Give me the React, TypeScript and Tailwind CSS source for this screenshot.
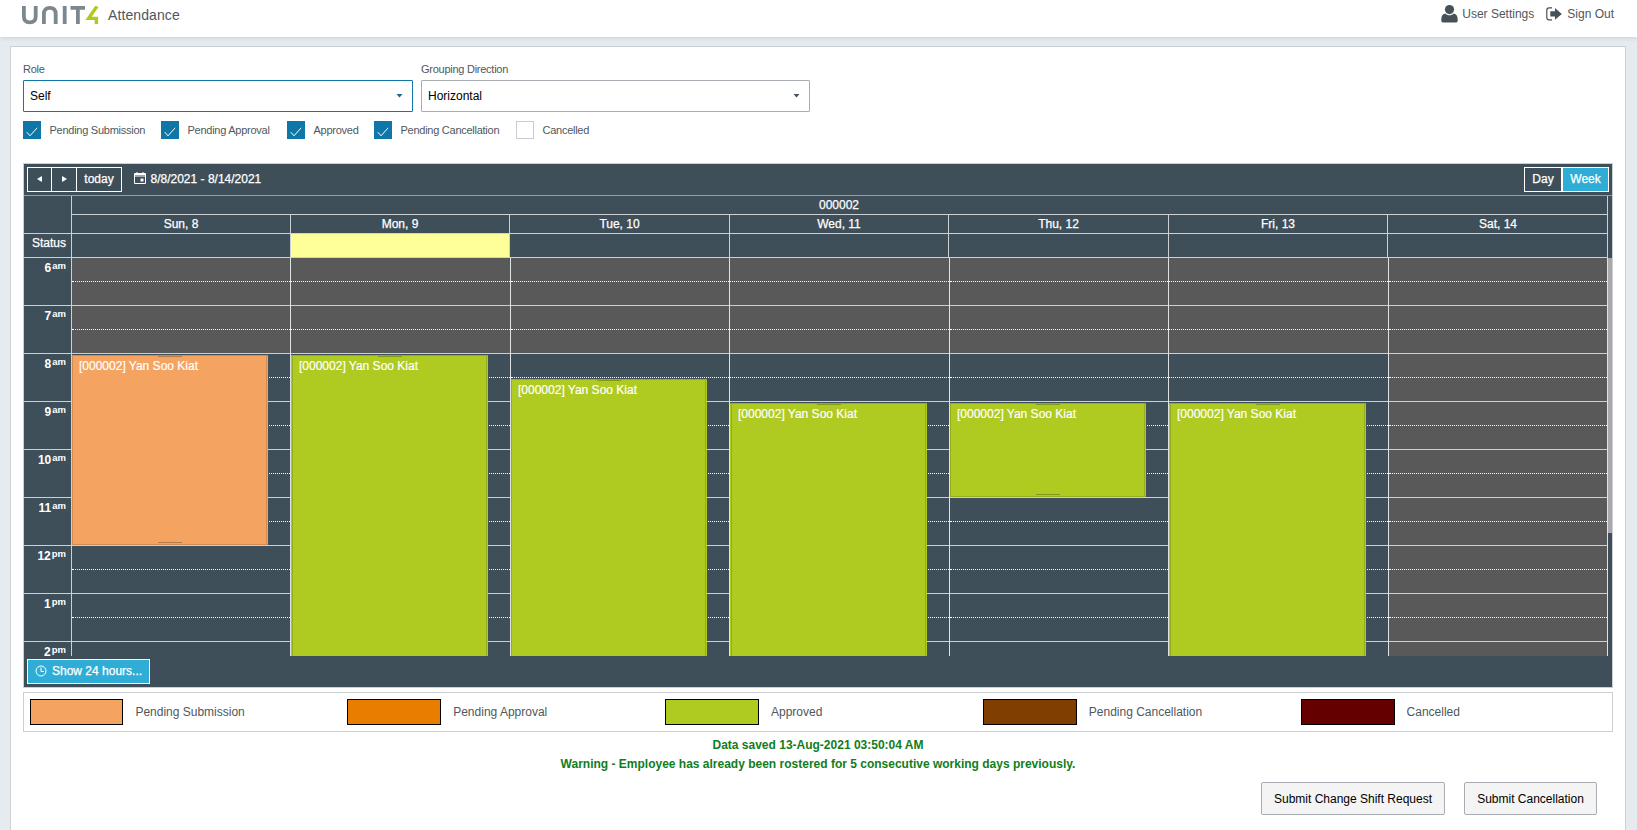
import type { ReactNode } from "react";
import clsx from "clsx";

const PX_PER_HOUR = 48;
const START_HOUR = 6;

const filters = [
  { label: "Pending Submission", checked: true, className: "w-[138px]" },
  { label: "Pending Approval", checked: true, className: "w-[126px]" },
  { label: "Approved", checked: true, className: "w-[87px]" },
  { label: "Pending Cancellation", checked: true, className: "w-[142px]" },
  { label: "Cancelled", checked: false, className: "w-[90px]" },
];

const hours = [
  ["6", "am"],
  ["7", "am"],
  ["8", "am"],
  ["9", "am"],
  ["10", "am"],
  ["11", "am"],
  ["12", "pm"],
  ["1", "pm"],
  ["2", "pm"],
];

type Shift = { start: number; end: number; className: string; inset?: boolean };
type Day = { label: string; today?: boolean; off?: boolean; headWidth: string; width: string; shift?: Shift };

const orange = "bg-[#f4a460] border-[#cf8b53]";
const green = "bg-[#afca21] border-[#96ad1d]";
const days: Day[] = [
  { label: "Sun, 8", headWidth: "w-[219px]", width: "w-[219px]", shift: { start: 8, end: 12, className: orange } },
  { label: "Mon, 9", today: true, headWidth: "w-[219px]", width: "w-[220px]", shift: { start: 8, end: 17, className: green, inset: true } },
  { label: "Tue, 10", headWidth: "w-[220px]", width: "w-[219px]", shift: { start: 8.5, end: 17, className: green } },
  { label: "Wed, 11", headWidth: "w-[219px]", width: "w-[220px]", shift: { start: 9, end: 17, className: green, inset: true } },
  { label: "Thu, 12", headWidth: "w-[220px]", width: "w-[219px]", shift: { start: 9, end: 11, className: green } },
  { label: "Fri, 13", headWidth: "w-[219px]", width: "w-[220px]", shift: { start: 9, end: 17, className: green, inset: true } },
  { label: "Sat, 14", off: true, headWidth: "w-[220px]", width: "w-[219px]" },
];

const legend = [
  { label: "Pending Submission", color: "bg-[#f4a460]" },
  { label: "Pending Approval", color: "bg-[#e97d00]" },
  { label: "Approved", color: "bg-[#afca21]" },
  { label: "Pending Cancellation", color: "bg-[#803e00]" },
  { label: "Cancelled", color: "bg-[#650000]" },
];

function Logo() {
  return (
    <svg width="78" height="20" viewBox="0 0 78 20" fill="none" stroke="#7d888e" strokeWidth="3.8">
      <path d="M1.9 0V10.5C1.9 14.5 4.2 16.3 7.8 16.3S13.7 14.5 13.7 10.5V0" />
      <path d="M21.9 18V8C21.9 4 24.2 1.9 27.8 1.9S33.7 4 33.7 8V18" />
      <path d="M42.7 0V18" />
      <path d="M48.5 1.9H63M55.9 1.9V18" />
      <path d="M75 0.3L66.6 12.4H74.4V18" stroke="#afca21" strokeWidth="3.4" />
    </svg>
  );
}

function UserIcon() {
  return (
    <svg width="17" height="18" viewBox="0 0 17 18" fill="#465158" className="mr-1">
      <circle cx="8.5" cy="4.6" r="4.6" />
      <path d="M4.2 8.4C5.3 9.5 6.8 10.2 8.5 10.2S11.7 9.5 12.8 8.4C15.6 8.8 16.7 11.2 16.7 14.4V15.4C16.7 16.8 15.8 17.6 14.4 17.6H2.6C1.2 17.6 0.3 16.8 0.3 15.4V14.4C0.3 11.2 1.4 8.8 4.2 8.4Z" />
    </svg>
  );
}

function SignOutIcon() {
  return (
    <svg width="16" height="14" viewBox="0 0 16 14" fill="#465158" className="ml-3 mr-[5px]">
      <path d="M6 0.8H3C1.7 0.8 0.8 1.7 0.8 3V10.6C0.8 11.9 1.7 12.8 3 12.8H6" fill="none" stroke="#465158" strokeWidth="1.2" />
      <path d="M4.3 4.2H9V1L15.8 6.9L9 12.8V9.6H4.3Z" />
    </svg>
  );
}

function Header() {
  return (
    <header className="relative flex h-[37px] justify-between bg-white pl-[22px] pr-[23px] text-[#4f575d] shadow-[0_1px_5px_rgba(0,0,0,0.12)]">
      <div className="flex items-start pt-1.5">
        <Logo />
        <span className="ml-2 text-[14px] leading-[18px] tracking-[0.1px]">Attendance</span>
      </div>
      <nav className="flex items-center pb-[9px] text-xs">
        <UserIcon />
        <span>User Settings</span>
        <SignOutIcon />
        <span>Sign Out</span>
      </nav>
    </header>
  );
}

function SelectField({ label, value, focused, className }: { label: string; value: string; focused?: boolean; className: string }) {
  return (
    <div className={className}>
      <div className="h-4 text-[11px] leading-[10px] tracking-[-0.26px] text-[#4f575d]">{label}</div>
      <div
        className={clsx(
          "flex h-8 items-center justify-between rounded-[1px] border pl-1.5 pr-[9px] text-xs text-black",
          focused ? "border-[#0f76a8]" : "border-[#a7adb3]",
        )}
      >
        <span>{value}</span>
        <svg width="7" height="4" className={focused ? "text-[#0f6d98]" : "text-[#4a5257]"}>
          <path d="M0.5 0H6.5L3.5 3.5Z" fill="currentColor" />
        </svg>
      </div>
    </div>
  );
}

function Checkbox({ label, checked, className }: { label: string; checked: boolean; className: string }) {
  return (
    <label className={clsx("flex h-[18px] items-center gap-[9px] whitespace-nowrap text-[11px] tracking-[-0.26px] text-[#4f575d]", className)}>
      <span className={clsx("flex size-[18px] shrink-0 items-center justify-center", checked ? "bg-[#0f76a8]" : "border border-[#ccc]")}>
        {checked && (
          <svg width="12" height="10" viewBox="0 0 12 10" fill="none" stroke="#fff" className="mt-[3px]">
            <path d="M0.8 5.2L4 8.8L11.2 0.8" />
          </svg>
        )}
      </span>
      <span className="-ml-[0.5px]">{label}</span>
    </label>
  );
}

function ToolButton({ children, className }: { children: ReactNode; className: string }) {
  return <button className={clsx("flex h-[25px] items-center justify-center border border-white pb-0.5", className)}>{children}</button>;
}

function Toolbar() {
  return (
    <div className="flex h-8 items-start border-b border-[#999] px-[3px] pt-[3px]">
      <ToolButton className="w-[25px]">
        <svg width="5" height="6"><path d="M0 3L5 0V6Z" fill="#fff" /></svg>
      </ToolButton>
      <ToolButton className="-ml-px w-[26px]">
        <svg width="5" height="6"><path d="M5 3L0 0V6Z" fill="#fff" /></svg>
      </ToolButton>
      <ToolButton className="-ml-px w-[46px]">today</ToolButton>
      <svg width="12" height="12" fill="none" stroke="#fff" className="ml-3 mt-[5px]">
        <path d="M0.5 1.5H11.5V11.5H0.5ZM0.5 2.5H11.5M0.5 4H11.5M3 0V2.5M9 0V2.5" />
        <path d="M6.5 6.5H9.5V9.5H6.5Z" fill="#fff" stroke="none" />
      </svg>
      <span className="ml-[4.5px] leading-[25px]">8/8/2021 - 8/14/2021</span>
      <ToolButton className="ml-auto w-[38px]">Day</ToolButton>
      <ToolButton className="w-[47px] bg-[#2fadd6]">Week</ToolButton>
    </div>
  );
}

function CalendarHead() {
  return (
    <div className="flex h-[62px]">
      <div className="flex w-12 shrink-0 flex-col border-r border-[#ccd0d3]">
        <div className="h-[38px] border-b border-[#ccd0d3]" />
        <div className="h-6 border-b border-[#ccd0d3] pr-[5px] pt-px text-right leading-[16px]">Status</div>
      </div>
      <div className="w-[1536px] shrink-0 border-r border-[#ccd0d3]">
        <div className="h-[19px] border-b border-[#ccd0d3] pr-px text-center leading-[18px]">000002</div>
        <div className="flex">
          {days.map((day, i) => (
            <div key={day.label} className={clsx("shrink-0", i < 6 && "border-r border-[#ccd0d3]", day.headWidth)}>
              <div className="h-[19px] border-b border-[#ccd0d3] text-center leading-[18px]">{day.label}</div>
              <div className={clsx("h-6 border-b border-[#ccd0d3]", day.today && "bg-[#ffff99]")} />
            </div>
          ))}
        </div>
      </div>
    </div>
  );
}

function ShiftBlock({ shift }: { shift: Shift }) {
  const top = (shift.start - START_HOUR) * PX_PER_HOUR + 1;
  const height = (shift.end - shift.start) * PX_PER_HOUR - 2;
  return (
    <div className={clsx("absolute left-0 right-[22px] border-y pr-px", shift.inset && "pl-px", shift.className)} style={{ top, height }}>
      <div className="h-full border-x border-inherit pl-1.5 pt-[3px] leading-[15px] [-webkit-text-stroke:0.2px_white]">{"[000002] Yan Soo Kiat"}</div>
      <i className="absolute left-1/2 top-0 -ml-3 h-px w-6 bg-black/25" />
      <i className="absolute bottom-px left-1/2 -ml-3 h-px w-6 bg-black/25" />
    </div>
  );
}

function CalendarBody() {
  return (
    <div className="flex h-[398px] overflow-hidden">
      <div className="w-12 shrink-0 border-r border-[#ccd0d3]">
        {hours.map(([hour, suffix]) => (
          <div key={hour} className="flex h-12 items-start justify-end border-b border-[#ccd0d3] pr-[5px] pt-[3px] font-bold [-webkit-text-stroke:0]">
            <span className="leading-[15px]">{hour}</span>
            <span className="ml-px text-[9.5px] leading-[9px]">{suffix}</span>
          </div>
        ))}
      </div>
      {days.map((day) => (
        <div key={day.label} className={clsx("relative shrink-0 border-r border-[#dfe2e4]", day.width)}>
          {hours.map(([hour], i) => (
            <div key={hour} className={clsx("h-12 border-b border-[#ccd0d3]", (day.off || i < 2) && "bg-[#595959]")}>
              <div className="h-6 border-b border-dotted border-white" />
            </div>
          ))}
          {day.shift && <ShiftBlock shift={day.shift} />}
        </div>
      ))}
      <div className="h-[275px] w-1 bg-[#aaa8ac]" />
    </div>
  );
}

function Scheduler() {
  return (
    <section className="mt-6 h-[525px] border border-[#ccd0d3] bg-[#3f4f59] text-xs text-white [-webkit-text-stroke:0.25px_white]">
      <Toolbar />
      <CalendarHead />
      <CalendarBody />
      <button className="ml-[3px] mt-[3px] flex h-[25px] w-[123px] items-center border border-white bg-[#2fadd6] pb-0.5 pl-[7px]">
        <svg width="12" height="12" fill="none" stroke="#fff" className="mr-[5px]">
          <circle cx="6" cy="6" r="5" />
          <path d="M6 2.5V6.5H9" />
        </svg>
        Show 24 hours...
      </button>
    </section>
  );
}

export default function App() {
  return (
    <div className="h-[830px] w-[1637px] overflow-hidden bg-[#e6ebef] font-['Liberation_Sans',Arial,sans-serif]">
      <Header />
      <main className="mt-[9px] ml-[10px] h-[800px] w-[1616px] border border-[#ccd1d5] bg-white px-3 pt-[17px]">
        <div className="flex gap-2">
          <SelectField label="Role" value="Self" focused className="w-[390px]" />
          <SelectField label="Grouping Direction" value="Horizontal" className="w-[389px]" />
        </div>
        <div className="mt-[9px] flex">
          {filters.map((filter) => (
            <Checkbox key={filter.label} {...filter} />
          ))}
        </div>

        <Scheduler />

        <div className="mt-1 h-10 border border-[#ccd0d3] text-xs text-[#4f575d]">
          <div className="-mr-px grid h-full grid-cols-5 items-center">
            {legend.map((item) => (
              <div key={item.label} className="flex items-center gap-3 pl-[5.6px]">
                <span className={clsx("h-[26px] w-[93.8px] border border-black", item.color)} />
                {item.label}
              </div>
            ))}
          </div>
        </div>

        <div className="mt-1 text-center text-xs font-bold leading-[19px] text-[#117d1c]">
          <p>Data saved 13-Aug-2021 03:50:04 AM</p>
          <p>Warning - Employee has already been rostered for 5 consecutive working days previously.</p>
        </div>

        <div className="mt-2 flex justify-end gap-[19px] pr-4 text-xs text-black">
          <button className="h-[33px] w-[184px] rounded-xs border border-[#a7adb3] bg-[#f4f4f4]">Submit Change Shift Request</button>
          <button className="h-[33px] w-[133px] rounded-xs border border-[#a7adb3] bg-[#f4f4f4]">Submit Cancellation</button>
        </div>
      </main>
    </div>
  );
}
